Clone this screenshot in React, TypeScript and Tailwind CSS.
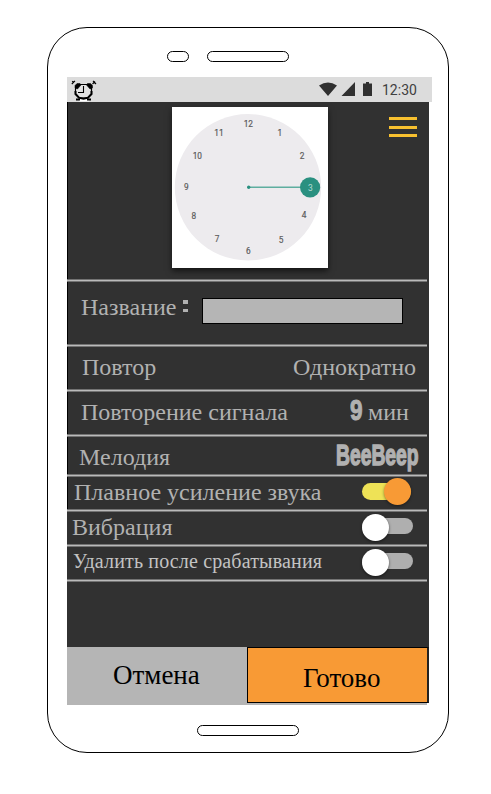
import type { ReactNode } from 'react';

const numerals: [string, number, number][] = [
  ['12', 76.3, 17], ['1', 107.7, 26], ['2', 130, 49], ['4', 132, 107.5], ['5', 109, 133],
  ['6', 76.3, 143.5], ['7', 45, 132], ['8', 21.7, 108.3], ['9', 14.3, 80], ['10', 25.3, 49], ['11', 47, 26],
];

function Clock() {
  return (
    <svg width="156" height="161" viewBox="0 0 156 161" className="mt-[5px] ml-[105px] bg-white shadow-[0_3px_6px_rgba(0,0,0,0.6)]">
      <circle cx="76" cy="80.3" r="73.2" fill="#edebee" />
      <g className="font-['Roboto',sans-serif] text-[9px]" fill="#5c5c5c" stroke="#5c5c5c" strokeWidth="0.2" textAnchor="middle">
        {numerals.map(([n, x, y]) => (
          <text key={n} transform={`translate(${x} ${y + 3.2}) scale(0.92 1)`}>{n}</text>
        ))}
      </g>
      <path d="M77 80.2H130" stroke="#5fae9f" strokeWidth="1.5" />
      <circle cx="76.7" cy="80.2" r="1.7" fill="#2a9080" />
      <circle cx="138.1" cy="80.4" r="10.1" fill="#2a9080" />
      <text x="138.4" y="83.5" textAnchor="middle" fill="#b5ddd5" className="font-['Roboto',sans-serif] text-[8.5px]">3</text>
    </svg>
  );
}

function AlarmIcon() {
  return (
    <svg width="27" height="22" viewBox="0 0 27 22" fill="none" stroke="#000">
      <path d="M8 20.300h10" stroke="#fff" strokeWidth="2" />
      <path d="M8 4.500h9l3.500 4v5L17 18H8l-3.500-4.500v-5z" fill="#e4e4e4" strokeWidth="1.200" />
      <path d="M4 5.500L6 3.500h3l1 1.500-3.500 4L4 8zM21.500 5.500l-2-2h-3L15.500 5 19 9l2.500-1z" fill="#000" strokeWidth="0.500" />
      <path d="M4.500 11v3l3.500 3.700 4.500 1 4.500-1 3.500-3.700v-3" strokeWidth="2" />
      <path d="M.8 4L4 .8M1.200 1.200l1.500 1.500M22 .8L25 4M21.500 4l2.500-2.500" strokeWidth="1.100" />
      <path d="M12.500 6v6.500H7" strokeWidth="1.100" />
      <path d="M5 19.500h4M16 19.500h4" strokeWidth="1.800" />
    </svg>
  );
}

function Toggle({ on = false }: { on?: boolean }) {
  return on ? (
    <div className="mt-[3px] mr-[18px] ml-auto flex h-[17px] w-[49px] items-center justify-end rounded-full bg-[#eee256]">
      <div className="size-[27px] shrink-0 rounded-full bg-[#f89a35] shadow-[0_1px_3px_rgba(0,0,0,0.45)]" />
    </div>
  ) : (
    <div className="mt-[6px] mr-[16px] ml-auto flex h-4 w-[51px] items-center rounded-full bg-[#afafaf]">
      <div className="mt-[3px] size-[27px] shrink-0 rounded-full bg-white shadow-[0_1px_3px_rgba(0,0,0,0.55)]" />
    </div>
  );
}

function Divider() {
  return <div className="h-[3px] w-[360px] shrink-0 border-y border-[#737373] bg-[#bababa]" />;
}

function Row({ className, edge = true, children }: { className: string; edge?: boolean; children: ReactNode }) {
  return (
    <>
      <Divider />
      <div className={`flex shrink-0 items-start border-l whitespace-nowrap ${edge ? 'border-black' : 'border-transparent'} ${className}`}>{children}</div>
    </>
  );
}

export default function App() {
  return (
    <div className="h-[794px] w-[491px] overflow-hidden bg-white pt-[27px] pl-[47px] font-['Liberation_Serif',serif]">
      <div className="flex h-[726px] w-[402px] flex-col rounded-[40px] border border-black">
        <div className="flex h-[49px] shrink-0 gap-[18px] pt-[23px] pl-[119px]">
          <div className="h-[11px] w-[22px] rounded-full border border-black" />
          <div className="h-[11px] w-[82px] rounded-full border border-black" />
        </div>
        <div className="ml-[19px] flex h-[25px] w-[365px] shrink-0 bg-[#dcdcdc] pt-[3px] pl-[4px]">
          <AlarmIcon />
          <svg width="56" height="16" viewBox="0 0 56 16" className="mt-[1px] ml-[220px]" fill="#303030">
            <path d="M1 4.500Q10 -1.500 19 4.500L10 15zM23.500 15H37V1zM45 2.500H48V1H51V2.500H54V15H45z" />
          </svg>
          <span className="ml-[8px] font-['Roboto',sans-serif] text-[14px] leading-[21px] text-[#404040]">12:30</span>
        </div>
        <div className="ml-[19px] flex h-[545px] w-[362px] shrink-0 flex-col bg-[#313131] text-[24px] leading-[24px] text-[#b1b1b1]">
          <div className="flex h-[177px] shrink-0 items-start border-l border-black">
            <div className="-ml-px">
              <Clock />
            </div>
            <div className="mt-[15px] ml-[61px] flex flex-col gap-[5.500px]">
              <div className="h-[3px] w-7 bg-[#f7c02f]" />
              <div className="h-[3px] w-7 bg-[#f7c02f]" />
              <div className="h-[3px] w-7 bg-[#f7c02f]" />
            </div>
          </div>
          <Row className="h-[62px] pt-[13px] pl-[13px]">
            <span className="w-[95px]">Название</span>
            <div className="mt-[5px] ml-[7px] flex flex-col gap-[5px]">
              <div className="h-[3.500px] w-[5px] bg-[#b1b1b1]" />
              <div className="h-[3.500px] w-[5px] bg-[#b1b1b1]" />
            </div>
            <div className="mt-[3px] ml-[14px] h-[26px] w-[201px] border border-black bg-[#b5b5b5]" />
          </Row>
          <Row className="h-[42px] justify-between pt-[8px] pr-[13px] pl-[14px]">
            <span>Повтор</span>
            <span>Однократно</span>
          </Row>
          <Row className="h-[42px] pt-[8px] pl-[13px]">
            <span className="w-[269px]">Повторение сигнала</span>
            <span className="-mt-[2px] w-[18px]">
              <span className="inline-block origin-left scale-x-[0.78] font-['Liberation_Sans',sans-serif] text-[29px] font-bold [-webkit-text-stroke:1px_#b1b1b1]">9</span>
            </span>
            <span>мин</span>
          </Row>
          <Row className="h-[37px] pt-[8px] pl-[11px]">
            <span className="w-[257px] shrink-0">Мелодия</span>
            <span className="-mt-[2px] inline-block shrink-0 origin-left scale-x-[0.665] font-['Liberation_Sans',sans-serif] text-[29px] font-bold [-webkit-text-stroke:1.4px_#b1b1b1]">BeeBeep</span>
          </Row>
          <Row className="h-[32px] pt-[3px] pl-[6px]">
            <span>Плавное усиление звука</span>
            <Toggle on />
          </Row>
          <Row edge={false} className="h-[32px] pl-[4px]">
            <span className="mt-[3px]">Вибрация</span>
            <Toggle />
          </Row>
          <Row edge={false} className="h-[32px] pl-[5px]">
            <span className="mt-[2px] text-[20px] tracking-[0.15px] text-[#c3c3c3]">Удалить после срабатывания</span>
            <Toggle />
          </Row>
          <Divider />
        </div>
        <div className="ml-[19px] flex h-[58px] w-[360px] shrink-0 bg-[#b5b5b5] text-[27px] leading-[27px] text-black">
          <div className="w-[180px] shrink-0 pt-[15px] pl-[46px]">Отмена</div>
          <div className="h-[56px] w-[182px] shrink-0 border border-r-2 border-black border-r-[#222] bg-[#f89a35] pt-[17px] pl-[55px]">Готово</div>
        </div>
        <div className="mt-[20px] ml-[149px] h-[11px] w-[102px] shrink-0 rounded-full border border-black" />
      </div>
    </div>
  );
}
